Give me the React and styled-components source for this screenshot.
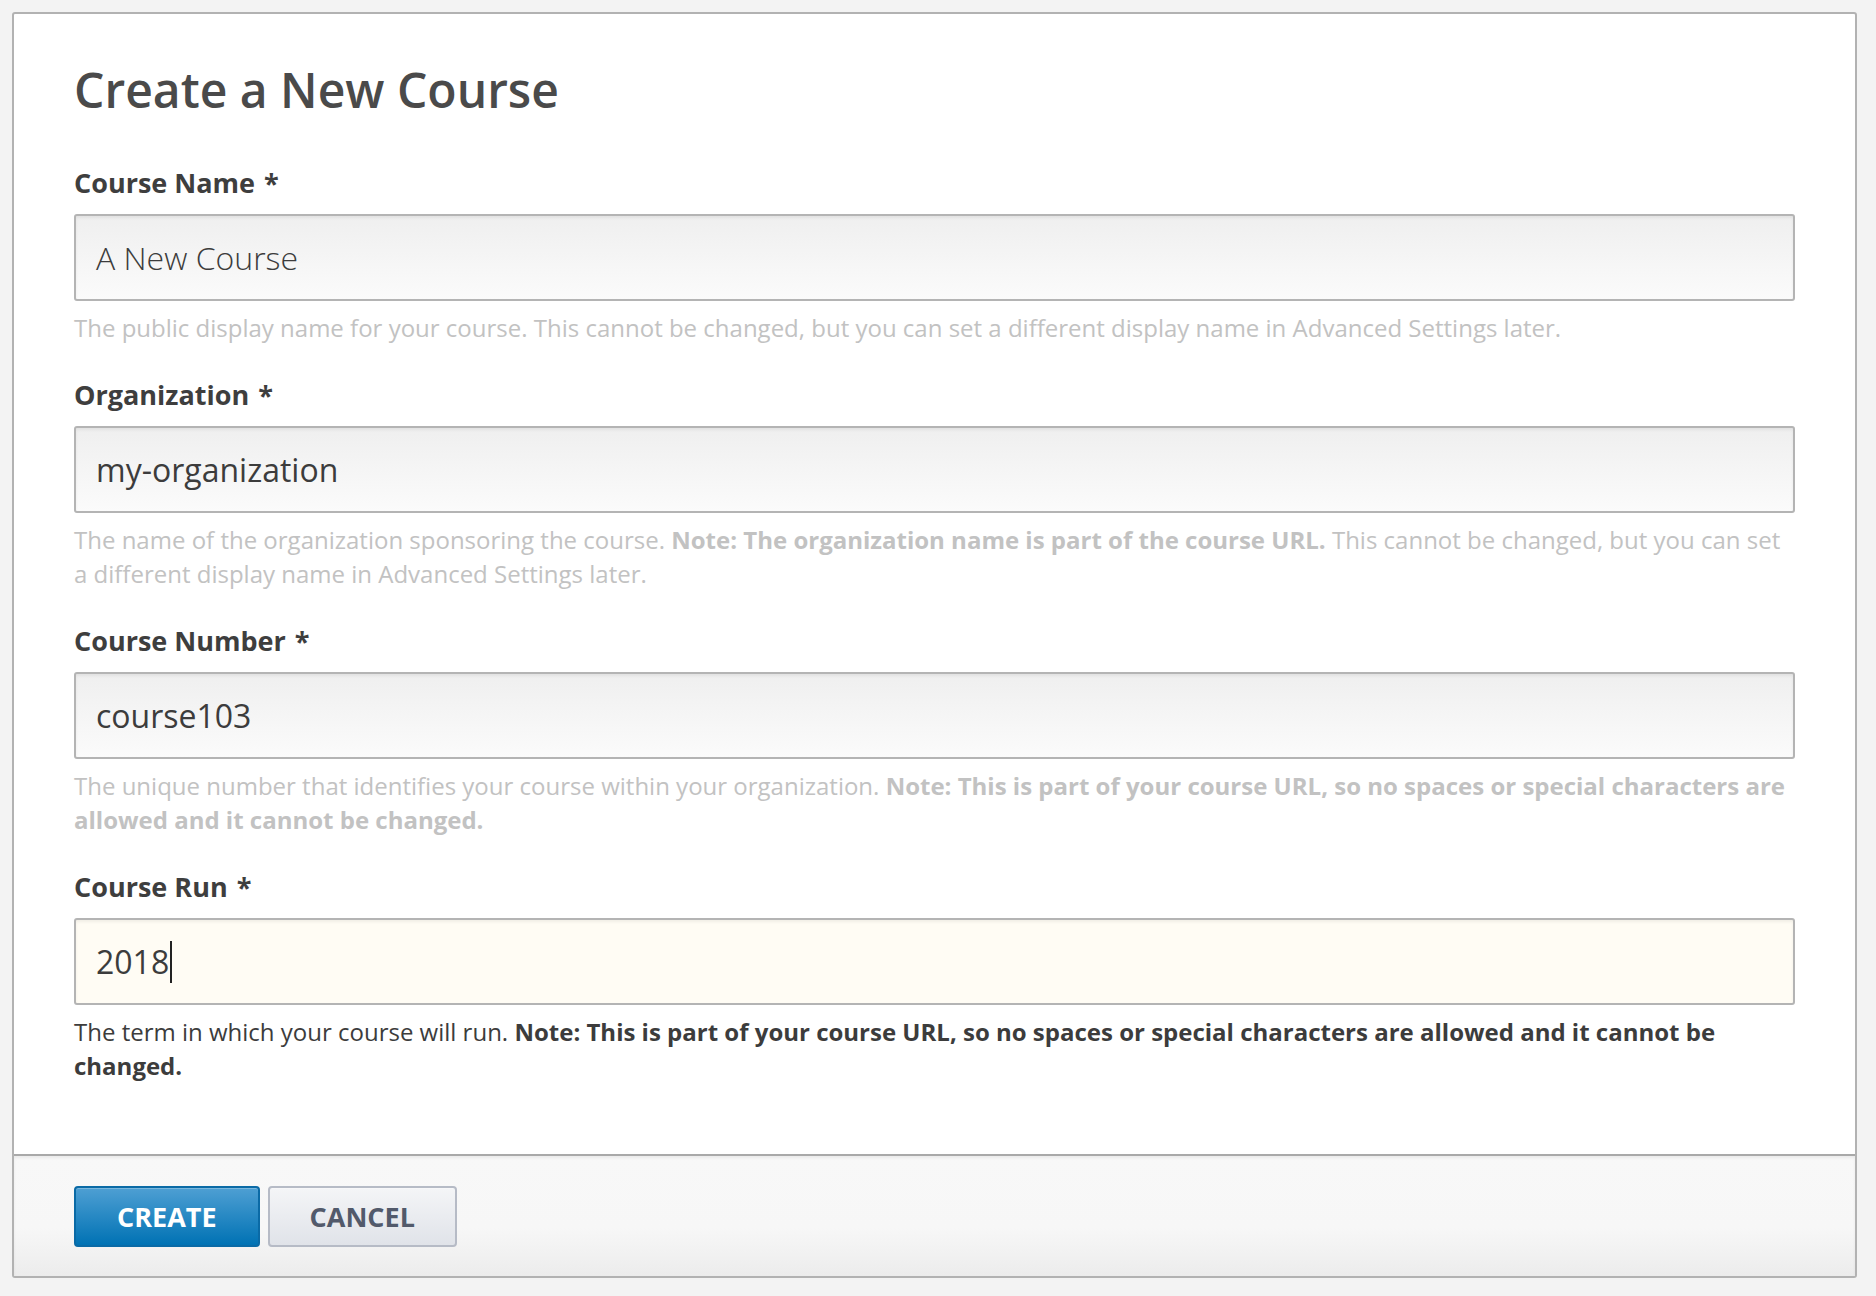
import React from "react"
import styled, { createGlobalStyle } from "styled-components"

const GlobalStyle = createGlobalStyle`
  html, body {
    margin: 0;
    padding: 0;
    background: #f3f3f3;
    font-family: "Open Sans", "Noto Sans", sans-serif;
    color: #3c3c3c;
  }
`

const Page = styled.div`
  padding: 12px 19px 18px 12px;
`

const Card = styled.div`
  background: #fff;
  border: 2px solid #b2b2b2;
  border-radius: 3px;
  overflow: hidden;
`

const Body = styled.div`
  padding: 48px 60px 71px 60px;
`

const Title = styled.h1`
  margin: 0 0 46px;
  font-size: 48px;
  font-weight: 600;
  line-height: 56px;
  color: #4a4a4a;
`

const Field = styled.div`
  margin-bottom: 31px;

  &:last-child {
    margin-bottom: 0;
  }
`

const Label = styled.label`
  display: block;
  font-size: 27px;
  font-weight: 700;
  line-height: 37px;
  color: #3e3e3e;
  margin-bottom: 13px;

  span {
    margin-left: 9px;
  }
`

const InputBox = styled.div`
  box-sizing: border-box;
  height: 87px;
  padding: 0 20px;
  display: flex;
  align-items: center;
  border: 2px solid #b4b4b4;
  border-radius: 3px;
  background: ${({ $focused }) =>
    $focused ? "#fffcf4" : "linear-gradient(to bottom, #efefef 0%, #fbfbfb 100%)"};
  box-shadow: inset 0 2px 3px rgba(0, 0, 0, 0.06);
  font-size: 32px;
  font-weight: ${({ $light }) => ($light ? 300 : 400)};
  color: #3c3c3c;
`

const Caret = styled.span`
  display: inline-block;
  width: 2px;
  height: 42px;
  background: #222;
  margin-left: 1px;
`

const Help = styled.p`
  margin: 10px 0 0;
  font-size: 24px;
  line-height: 34px;
  color: ${({ $active }) => ($active ? "#3c3c3c" : "#c2c2c2")};

  strong {
    font-weight: 700;
  }
`

const Footer = styled.div`
  border-top: 2px solid #a9a9a9;
  box-shadow: inset 0 2px 3px rgba(0, 0, 0, 0.06);
  background: linear-gradient(to bottom, #f8f8f8 0%, #f7f7f7 60%, #ececec 100%);
  padding: 30px 60px 29px;
  display: flex;
  gap: 8px;
`

const Button = styled.button`
  box-sizing: border-box;
  height: 61px;
  padding: 0 ${({ $primary }) => ($primary ? "41px" : "40px")};
  border-radius: 4px;
  font-family: "Open Sans", "Noto Sans", sans-serif;
  font-size: 27px;
  font-weight: 700;
  text-transform: uppercase;
  cursor: pointer;
  border: 2px solid ${({ $primary }) => ($primary ? "#0a6aa6" : "#b6bbc6")};
  color: ${({ $primary }) => ($primary ? "#fff" : "#525a6b")};
  background: ${({ $primary }) =>
    $primary
      ? "linear-gradient(to bottom, #4e9fd3 0%, #0072b4 100%)"
      : "linear-gradient(to bottom, #f4f5f7 0%, #e0e3e9 100%)"};
  box-shadow: inset 0 1px 0 rgba(255, 255, 255, 0.25);
`

const fields = [
  {
    label: "Course Name",
    value: "A New Course",
    light: true,
    help: (
      <>
        The public display name for your course. This cannot be changed, but you can set a
        different display name in Advanced Settings later.
      </>
    ),
  },
  {
    label: "Organization",
    value: "my-organization",
    help: (
      <>
        The name of the organization sponsoring the course.{" "}
        <strong>Note: The organization name is part of the course URL.</strong> This cannot be
        changed, but you can set a different display name in Advanced Settings later.
      </>
    ),
  },
  {
    label: "Course Number",
    value: "course103",
    help: (
      <>
        The unique number that identifies your course within your organization.{" "}
        <strong>
          Note: This is part of your course URL, so no spaces or special characters are allowed
          and it cannot be changed.
        </strong>
      </>
    ),
  },
  {
    label: "Course Run",
    value: "2018",
    focused: true,
    help: (
      <>
        The term in which your course will run.{" "}
        <strong>
          Note: This is part of your course URL, so no spaces or special characters are allowed
          and it cannot be changed.
        </strong>
      </>
    ),
  },
]

const App = () => {
  return (
    <Page>
      <GlobalStyle />
      <Card>
        <Body>
          <Title>Create a New Course</Title>
          {fields.map((f) => (
            <Field key={f.label}>
              <Label>
                {f.label}
                <span>*</span>
              </Label>
              <InputBox $focused={f.focused} $light={f.light}>
                {f.value}
                {f.focused && <Caret />}
              </InputBox>
              <Help $active={f.focused}>{f.help}</Help>
            </Field>
          ))}
        </Body>
        <Footer>
          <Button $primary>Create</Button>
          <Button>Cancel</Button>
        </Footer>
      </Card>
    </Page>
  )
}

export default App
